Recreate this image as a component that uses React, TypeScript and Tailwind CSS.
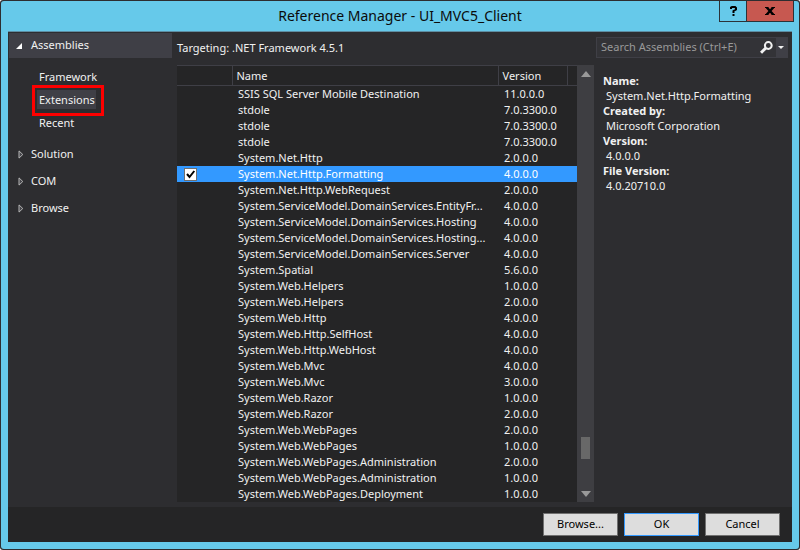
import { useState } from "react";

type Assembly = { name: string; version: string };

const assemblies: Assembly[] = [
  { name: "SSIS SQL Server Mobile Destination", version: "11.0.0.0" },
  { name: "stdole", version: "7.0.3300.0" },
  { name: "stdole", version: "7.0.3300.0" },
  { name: "stdole", version: "7.0.3300.0" },
  { name: "System.Net.Http", version: "2.0.0.0" },
  { name: "System.Net.Http.Formatting", version: "4.0.0.0" },
  { name: "System.Net.Http.WebRequest", version: "2.0.0.0" },
  { name: "System.ServiceModel.DomainServices.EntityFr...", version: "4.0.0.0" },
  { name: "System.ServiceModel.DomainServices.Hosting", version: "4.0.0.0" },
  { name: "System.ServiceModel.DomainServices.Hosting...", version: "4.0.0.0" },
  { name: "System.ServiceModel.DomainServices.Server", version: "4.0.0.0" },
  { name: "System.Spatial", version: "5.6.0.0" },
  { name: "System.Web.Helpers", version: "1.0.0.0" },
  { name: "System.Web.Helpers", version: "2.0.0.0" },
  { name: "System.Web.Http", version: "4.0.0.0" },
  { name: "System.Web.Http.SelfHost", version: "4.0.0.0" },
  { name: "System.Web.Http.WebHost", version: "4.0.0.0" },
  { name: "System.Web.Mvc", version: "4.0.0.0" },
  { name: "System.Web.Mvc", version: "3.0.0.0" },
  { name: "System.Web.Razor", version: "1.0.0.0" },
  { name: "System.Web.Razor", version: "2.0.0.0" },
  { name: "System.Web.WebPages", version: "2.0.0.0" },
  { name: "System.Web.WebPages", version: "1.0.0.0" },
  { name: "System.Web.WebPages.Administration", version: "2.0.0.0" },
  { name: "System.Web.WebPages.Administration", version: "1.0.0.0" },
  { name: "System.Web.WebPages.Deployment", version: "1.0.0.0" },
];

const details = [
  { label: "Name:", value: "System.Net.Http.Formatting" },
  { label: "Created by:", value: "Microsoft Corporation" },
  { label: "Version:", value: "4.0.0.0" },
  { label: "File Version:", value: "4.0.20710.0" },
];

function TitleBar() {
  return (
    <header className="grid h-[30px] shrink-0 grid-cols-[1fr_auto_1fr] items-start px-[5px]">
      <span />
      <h1 className="text-[14px] leading-[30px] text-[#0b0b0b]">Reference Manager - UI_MVC5_Client</h1>
      <div className="flex justify-end">
        <button aria-label="Help" className="flex h-[21px] w-7 items-center justify-center border border-t-0 border-[#2b3238]">
          <svg width="7" height="10" viewBox="0 0 7 10" fill="none" stroke="#000" strokeWidth="2">
            <path d="M1 3V1.5L2 1H5L6 2V3.5L3.5 5V7M3.5 8V10" />
          </svg>
        </button>
        <button aria-label="Close" className="flex h-[21px] w-[47px] items-center justify-center border border-t-0 border-l-0 border-[#2b3238] bg-[#c75850]">
          <svg width="10" height="8" viewBox="0 0 10 8" fill="none" stroke="#000">
            <path d="M0 .5H3.4M6.6 .5H10M0 7.5H3.4M6.6 7.5H10" strokeWidth="1" />
            <path d="M1.8 .5L8.2 7.5M8.2 .5L1.8 7.5" strokeWidth="2.4" />
          </svg>
        </button>
      </div>
    </header>
  );
}

function CollapsedArrow() {
  return (
    <svg width="6" height="9" viewBox="0 0 6 9" fill="#45454a" stroke="#b5b5b5">
      <path d="M1 .9V8.1L4.8 4.5Z" />
    </svg>
  );
}

function Sidebar() {
  return (
    <nav className="w-[164px] shrink-0 pl-px pt-px">
      <button className="flex h-[25px] w-full items-center gap-[9px] bg-[#3f3f46] pl-[7px]">
        <svg width="6" height="6" viewBox="0 0 6 6" fill="#fff">
          <path d="M6 0V6H0Z" />
        </svg>
        Assemblies
      </button>
      <ul className="pt-[7px]">
        <li className="flex h-5 items-end pl-[30px]">
          <button className="leading-4">Framework</button>
        </li>
        <li className="ml-[23px] h-[31px] w-[72px] border-3 border-[#fe0000] p-[2px]">
          <button className="block h-[19px] w-[59px] bg-[#3f3f46] pl-[2px] text-left leading-[18px]">Extensions</button>
        </li>
        <li className="flex h-[14px] items-center pl-[30px]">
          <button className="leading-4">Recent</button>
        </li>
      </ul>
      <ul className="pt-[11px]">
        {["Solution", "COM", "Browse"].map((group) => (
          <li key={group} className="flex h-[27px] items-center">
            <button className="flex items-center gap-[7px] pl-[9px]">
              <CollapsedArrow />
              {group}
            </button>
          </li>
        ))}
      </ul>
    </nav>
  );
}

function ScrollBar() {
  return (
    <div className="flex w-[17px] shrink-0 flex-col items-center bg-[#3e3e42]">
      <button aria-label="Scroll up" className="flex h-[17px] w-full items-center justify-center">
        <svg width="10" height="6" viewBox="0 0 10 6" fill="#999">
          <path d="M0 6L5 0L10 6Z" />
        </svg>
      </button>
      <span className="grow" />
      <span className="h-[22px] w-[9px] bg-[#686868]" />
      <span className="h-[26px]" />
      <button aria-label="Scroll down" className="flex h-[17px] w-full items-center justify-center">
        <svg width="10" height="6" viewBox="0 0 10 6" fill="#999">
          <path d="M0 0L5 6L10 0Z" />
        </svg>
      </button>
    </div>
  );
}

function AssemblyList() {
  const [selected] = useState(5);
  const [checked, setChecked] = useState(true);
  return (
    <div className="flex bg-[#252526]">
      <table className="w-full table-fixed border-collapse">
        <colgroup>
          <col className="w-[55px]" />
          <col />
          <col className="w-[69px]" />
          <col className="w-[10px]" />
        </colgroup>
        <thead>
          <tr className="h-5 border-y border-[#3f3f46] text-left">
            <th className="border-r border-[#3f3f46] p-0" />
            <th className="border-r border-[#3f3f46] p-0 pl-1 font-normal leading-4">Name</th>
            <th className="border-r border-[#3f3f46] p-0 pl-1 font-normal leading-4">Version</th>
            <th className="p-0" />
          </tr>
        </thead>
        <tbody>
          {assemblies.map((item, index) => (
            <tr key={index} className={index === selected ? "h-4 bg-[#3399ff] text-white" : "h-4"}>
              <td className="p-0 pl-[7px] align-middle">
                {index === selected && (
                  <label className="relative block size-[13px]">
                    <input
                      type="checkbox"
                      aria-label={item.name}
                      checked={checked}
                      onChange={(event) => setChecked(event.target.checked)}
                      className="block size-[13px] appearance-none border border-[#707070] bg-white"
                    />
                    {checked && (
                      <svg className="pointer-events-none absolute inset-0" width="13" height="13" viewBox="0 0 13 13" fill="none" stroke="#000" strokeWidth="2">
                        <path d="M3 6L5.5 9L10.3 3" />
                      </svg>
                    )}
                  </label>
                )}
              </td>
              <td className="overflow-hidden p-0 pl-[6px] leading-4 whitespace-nowrap">{item.name}</td>
              <td className="p-0 pl-[6px] leading-4 whitespace-nowrap" colSpan={2}>
                {item.version}
              </td>
            </tr>
          ))}
        </tbody>
      </table>
      <ScrollBar />
    </div>
  );
}

function SearchBox() {
  return (
    <div className="flex h-[21px] border border-[#3f3f46] bg-[#333337]">
      <input
        type="search"
        aria-label="Search Assemblies"
        placeholder="Search Assemblies (Ctrl+E)"
        className="w-0 grow bg-transparent pl-1 outline-none placeholder:text-[#999999]"
      />
      <button aria-label="Search" className="flex w-5 items-center justify-center">
        <svg width="13" height="13" viewBox="0 0 13 13" fill="none" stroke="#f1f1f1">
          <circle cx="8.3" cy="4.5" r="3.4" strokeWidth="2" />
          <path d="M5.8 7L1 11.8" strokeWidth="3" />
        </svg>
      </button>
      <button aria-label="Search options" className="flex w-[11px] items-center justify-center bg-[#3f3f46] pr-px">
        <svg width="6" height="3" viewBox="0 0 6 3" fill="#f1f1f1">
          <path d="M0 0H6L3 3Z" />
        </svg>
      </button>
    </div>
  );
}

export default function App() {
  return (
    <div className="h-screen min-h-[550px] rounded-[3px] bg-[#2d2d30] p-px font-['Noto_Sans','Open_Sans',sans-serif] text-[11px] text-[#f1f1f1]">
      <div className="flex h-full flex-col rounded-[3px] bg-[#66c9ea] pb-[7px]">
        <TitleBar />
        <div className="mx-[7px] flex grow flex-col border-t border-[#5d8ea3] bg-[#2d2d30]">
          <div className="flex grow">
            <Sidebar />
            <main className="ml-[5px] grow">
              <p className="h-[33px] pt-2 leading-4">Targeting: .NET Framework 4.5.1</p>
              <AssemblyList />
            </main>
            <aside className="ml-[2px] w-[196px] shrink-0 pt-[5px] pr-1">
              <SearchBox />
              <dl className="pt-[15px] pl-[7px]">
                {details.map((detail) => (
                  <div key={detail.label}>
                    <dt className="leading-[15px] font-bold">{detail.label}</dt>
                    <dd className="pl-[3px] leading-[15px] whitespace-nowrap">{detail.value}</dd>
                  </div>
                ))}
              </dl>
            </aside>
          </div>
          <footer className="flex h-[35px] shrink-0 items-center justify-end gap-[6px] bg-[#252526] pr-3 text-black">
            <button className="h-[23px] w-[75px] border border-[#707070] bg-[#dddddd]">Browse...</button>
            <button className="h-[23px] w-[75px] border border-[#3399ff] bg-[#dddddd]">OK</button>
            <button className="h-[23px] w-[75px] border border-[#707070] bg-[#dddddd]">Cancel</button>
          </footer>
        </div>
      </div>
    </div>
  );
}
